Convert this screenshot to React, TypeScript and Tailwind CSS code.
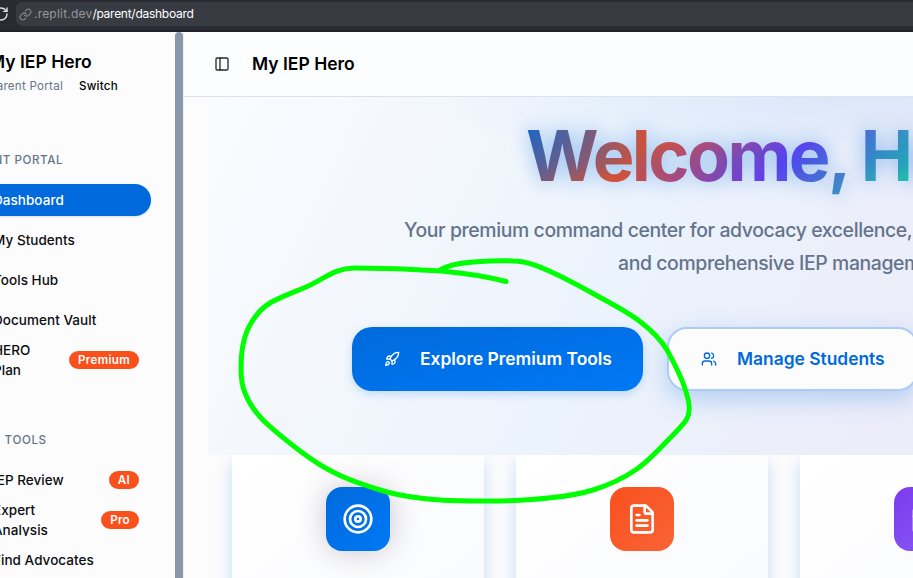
import React from "react";
import { RotateCw, Link, PanelLeft, Rocket, Users, FileText, Target, Calendar } from "lucide-react";

function NavItem({ label, active, badge }: { label: string; active?: boolean; badge?: string }) {
  return (
    <li
      className={
        "flex h-8 items-center justify-between overflow-hidden rounded-full pr-3 pl-[39px] text-[13.5px] leading-5 tracking-[0.04px] " +
        (active ? "bg-[#006adc] text-white shadow-sm" : "text-[#0c0d10]")
      }
    >
      <span className={badge && badge !== "AI" ? "w-[60px]" : "whitespace-nowrap"}>{label}</span>
      {badge && (
        <span className="flex h-[18px] shrink-0 items-center rounded-full bg-[#f9501c] px-[9px] text-[11.6px] font-semibold tracking-[0.32px] text-white">
          {badge}
        </span>
      )}
    </li>
  );
}

function Sidebar() {
  return (
    <aside className="flex w-[175px] shrink-0 justify-end overflow-hidden bg-[#fcfcfd]">
      <div className="w-[221px] shrink-0 pr-6">
        <div className="h-[103px] pt-[19px] pl-[35px]">
          <h2 className="text-[17.5px] leading-[22px] font-semibold whitespace-nowrap text-black">My IEP Hero</h2>
          <div className="mt-[5px] flex gap-4 text-[11.6px] leading-4 whitespace-nowrap">
            <span className="tracking-[0.25px] text-[#64748b]">Parent Portal</span>
            <span className="font-medium tracking-[0.25px] text-black">Switch</span>
          </div>
        </div>
        <h3 className="mt-[17px] h-4 pl-2 text-[11.6px] leading-[17px] font-medium tracking-[0.55px] text-[#64748b]">PARENT PORTAL</h3>
        <ul className="mt-4 flex flex-col gap-2 font-medium">
          <NavItem label="Dashboard" active />
          <NavItem label="My Students" />
          <NavItem label="Tools Hub" />
          <NavItem label="Document Vault" />
          <NavItem label="HERO Plan" badge="Premium" />
        </ul>
        <h3 className="mt-14 h-4 pl-3 text-[11.6px] leading-[17px] font-medium tracking-[0.6px] text-[#64748b]">PREM TOOLS</h3>
        <ul className="mt-4 flex flex-col gap-2 font-medium">
          <NavItem label="IEP Review" badge="AI" />
          <NavItem label="Expert Analysis" badge="Pro" />
          <NavItem label="Find Advocates" />
        </ul>
      </div>
    </aside>
  );
}

function Card({ tile, children }: { tile: string; children: React.ReactNode }) {
  return (
    <article className="flex h-[200px] w-[252px] shrink-0 justify-center bg-linear-to-br from-white to-[#f9fafd] pt-8 shadow-[0_8px_16px_rgba(0,106,220,0.22)]">
      <div className={"flex size-16 items-center justify-center rounded-2xl text-white " + tile}>{children}</div>
    </article>
  );
}

function Hero() {
  return (
    <section className="relative z-10 ml-6 flex h-[358px] w-[1150px] shrink-0 flex-col bg-[radial-gradient(ellipse_420px_70px_at_620px_0px,rgba(0,106,220,0.07),transparent),linear-gradient(116deg,#fafbfe_0%,#ebf3fc_38%,#edebf9_70%,#f4effb_100%)]">
      <h1 className="mt-4 ml-[318px] h-[86px] w-[524px] bg-[linear-gradient(135deg,#006adc_0%,#f9501c_25%,#6d3bf5_50%,#22d3a0_75%,#f9b01c_100%)] bg-clip-text text-[70px] leading-[86px] font-bold tracking-[-2.5px] whitespace-nowrap text-transparent [text-shadow:0_0_20px_rgba(0,106,220,0.4)]">
        Welcome, Hero!
      </h1>
      <p className="mt-[15px] ml-[196px] text-[19.4px] leading-[33px] font-[450] tracking-[-0.38px] whitespace-nowrap text-[#64748b]">
        Your premium command center for advocacy excellence, student success,
        <span className="block pl-[214px]">and comprehensive IEP management</span>
      </p>
      <div className="mt-[47px] ml-36 flex gap-6 text-[17.4px] font-semibold">
        <button className="flex h-16 w-[291px] shrink-0 items-center rounded-[20px] bg-linear-to-br from-[#006adc] to-[#0078f5] pl-8 text-white shadow-[0_3px_8px_rgba(0,106,220,0.2)]">
          <Rocket size={16} />
          <span className="ml-5 whitespace-nowrap">Explore Premium Tools</span>
        </button>
        <button className="flex h-16 w-[251px] shrink-0 items-center rounded-[20px] border-2 border-[#abcdf5] bg-[#fcfcfd] pl-8 text-[#006adc] shadow-[0_8px_24px_rgba(0,106,220,0.25)]">
          <Users size={16} />
          <span className="ml-5 whitespace-nowrap">Manage Students</span>
        </button>
      </div>
    </section>
  );
}

export default function App() {
  return (
    <div className="relative flex h-[578px] w-[913px] flex-col overflow-hidden bg-[#fcfcfd] font-['Inter',sans-serif]">
      <div className="flex h-8 shrink-0 items-start border-b-2 border-[#20212b] bg-[#292b33]">
        <RotateCw size={16} className="mt-[6px] -ml-[7px] shrink-0 text-[#e4e4e7]" />
        <div className="mt-[2px] ml-[7px] flex h-6 flex-1 items-center rounded-l-md bg-[#393b43] pl-[3px] text-xs">
          <Link size={13} className="text-[#8b8c92]" />
          <span className="ml-[2px] tracking-[0.2px] text-[#96979d]">.replit.dev</span>
          <span className="tracking-[-0.27px] text-white">/parent/dashboard</span>
        </div>
      </div>
      <div className="flex min-h-0 flex-1">
        <Sidebar />
        <div className="w-2 shrink-0 rounded-t-full bg-[#8898aa]" />
        <main className="flex w-[730px] shrink-0 flex-col overflow-hidden border-l border-[#edf0f5]">
          <header className="flex h-[65px] shrink-0 items-center border-b border-[#dce3ed] bg-[#fcfdfe] pl-[30px]">
            <PanelLeft size={16} className="text-[#27272a]" />
            <h2 className="ml-[22px] text-[17.5px] font-semibold text-black">My IEP Hero</h2>
          </header>
          <Hero />
          <div className="flex shrink-0 gap-8 pl-12">
            <Card tile="bg-linear-to-br from-[#006adc] to-[#0078f5] shadow-[0_0_30px_rgba(50,30,80,0.25)]">
              <Target size={32} />
            </Card>
            <Card tile="bg-linear-to-br from-[#f9501c] to-[#f96335]">
              <FileText size={32} />
            </Card>
            <Card tile="bg-linear-to-br from-[#7c3aed] to-[#8b5cf6]">
              <Calendar size={32} />
            </Card>
          </div>
        </main>
      </div>
      <svg className="pointer-events-none absolute inset-0 z-20" width="913" height="578" fill="none" stroke="#00ff00" strokeWidth="5" strokeLinecap="round" strokeLinejoin="round">
        <path d="M506 281.500C485 276 463 273 441 271C412 269 380 268 354 268C335 268 324 279 306.700 286.700C292 293 280 297 270 303C260 309 252 320 247 331C242 343 241 357 241 368C241 378 242 386 245 393C249 403 255 412 263 420C274 431 287 441 300 451C312 460 324 468 337 474C353 482 370 487 387 492C402 496 418 498 433 499.500C451 501 469 501 487 501C510 501 532 500 553 497.500C567 496 580 494 593 490C609 485 624 478 637 469C651 459 663 445 673 435C682 425 689 420 689 411C690 404 688 398 686 392C682 377 674 363 667 350C660 338 651 330 640 321.500C629 313 616 306 603 299C589 291 574 283 560 276C545 269 529 261 513 261C499 260 486 261 473 262C461 263 448 265 440 270" />
      </svg>
    </div>
  );
}
